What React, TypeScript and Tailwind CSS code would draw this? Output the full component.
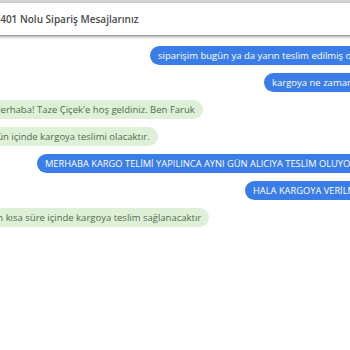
const messages = [
  { from: "me", text: "siparişim bugün ya da yarın teslim edilmiş olacak mı?", w: "w-[220px]", size: "text-[9.5px]" },
  { from: "me", text: "kargoya ne zaman verilecek?", w: "w-[106px]", size: "text-[9.5px]" },
  { from: "shop", text: "Merhaba! Taze Çiçek'e hoş geldiniz. Ben Faruk" },
  { from: "shop", text: "gün içinde kargoya teslimi olacaktır." },
  { from: "me", text: "MERHABA KARGO TELİMİ YAPILINCA AYNI GÜN ALICIYA TESLİM OLUYOR MU?", w: "w-[333px]", size: "text-[9.3px]" },
  { from: "me", text: "HALA KARGOYA VERİLMEDİ", w: "w-[125px]", size: "text-[9.3px]" },
  { from: "shop", text: "en kısa süre içinde kargoya teslim sağlanacaktır" },
];

export default function App() {
  return (
    <div
      className="w-[350px] h-[350px] overflow-hidden bg-white"
      style={{ fontFamily: '"Open Sans", "Noto Sans", sans-serif' }}
    >
      <div className="h-[3px] bg-[#d6d6d6]" />
      <div className="-ml-[18px] w-[388px]">
        <header className="flex h-[33px] items-center border-b border-[#9a9a9a] bg-white pl-[6px] shadow-[0_1px_3px_rgba(0,0,0,0.35)]">
          <h1 className="text-[10px] font-semibold text-[#4a4a4a]">
            #1401 Nolu Sipariş Mesajlarınız
          </h1>
        </header>
        <div className="flex flex-col gap-[8px] pt-[10px]">
          {messages.map((m, i) =>
            m.from === "me" ? (
              <div key={i} className="flex justify-end">
                <div
                  className={`${m.w} ${m.size} h-[19px] overflow-hidden whitespace-nowrap rounded-l-full bg-[#3b7de6] pl-[8px] leading-[19px] text-white`}
                >
                  {m.text}
                </div>
              </div>
            ) : (
              <div key={i} className="flex justify-start">
                <div className="h-[19px] whitespace-nowrap rounded-r-full bg-[#dff0d8] pl-[10px] pr-[8px] text-[9.5px] leading-[19px] text-[#4f6b4c]">
                  {m.text}
                </div>
              </div>
            ),
          )}
        </div>
      </div>
    </div>
  );
}
